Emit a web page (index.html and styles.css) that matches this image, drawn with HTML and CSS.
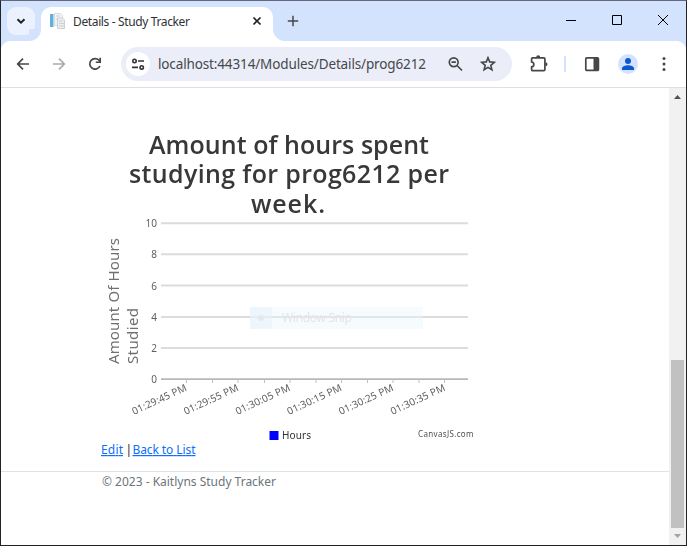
FILE: index.html
```html
<!DOCTYPE html>
<html lang="en">
<head>
<meta charset="utf-8">
<title>Details - Study Tracker</title>
<link rel="stylesheet" href="styles.css">
</head>
<body>
<div class="window">
  <header class="tabstrip">
    <button class="tab-search" aria-label="Search tabs"><svg width="28" height="28" viewBox="0 0 28 28"><path d="M10.500 12.300 14 15.700l3.500-3.400" fill="none" stroke="#202124" stroke-width="2"/></svg></button>
    <div class="tab">
      <svg class="favicon" width="17" height="16" viewBox="0 0 17 16"><path d="M1 1h3v13H1z" fill="#62b0da"/><path d="M4 1h1v13H4z" fill="#b4d9ec"/><path d="M5.500.500h6l2 2v10h-8z" fill="#f4f4f5" stroke="#d9dbde"/><path d="M8.500 5h5l2 2v8.500h-7z" fill="#eceef0" stroke="#cfd1d5"/><path d="M7 3h4M7 6h2M10 8h4M10 10.500h5M10 13h5" stroke="#cdd0d4"/></svg>
      <svg class="tab-title" width="122" height="20"><text x="0" y="15" textLength="117">Details - Study Tracker</text></svg>
      <svg class="tab-close" width="10" height="10" viewBox="0 0 10 10"><path d="m1.500 1.500 7 7m0-7-7 7" stroke="#202124" stroke-width="1.700"/></svg>
    </div>
    <svg class="new-tab" width="12" height="12" viewBox="0 0 12 12"><path d="M6 .800v10.400M.800 6h10.400" stroke="#474747" stroke-width="1.500"/></svg>
    <div class="captions">
      <svg width="46" height="40" viewBox="0 0 46 40"><path d="M18 19.500h10" stroke="#000"/></svg>
      <svg width="46" height="40" viewBox="0 0 46 40"><path d="M18.500 14.500h9v9h-9z" fill="none" stroke="#000"/></svg>
      <svg width="46" height="40" viewBox="0 0 46 40"><path d="m18 14 10 10m0-10L18 24" stroke="#000"/></svg>
    </div>
  </header>
  <nav class="toolbar">
    <svg class="nav-icon" width="20" height="20" viewBox="0 0 20 20"><path d="M16 10H5m5-5.300L4.700 10l5.300 5.300" fill="none" stroke="#474747" stroke-width="1.700"/></svg>
    <svg class="nav-icon" width="20" height="20" viewBox="0 0 20 20"><path d="M4 10h11m-5-5.300 5.300 5.300-5.300 5.300" fill="none" stroke="#ababab" stroke-width="1.700"/></svg>
    <svg class="nav-icon" width="20" height="20" viewBox="0 0 20 20"><path d="M14.900 12A5.300 5.300 0 1 1 14 6.300l1 1.300" fill="none" stroke="#474747" stroke-width="1.700"/><path d="M16 3.800V9h-5.200V7.400h3.500V3.800z" fill="#474747"/></svg>
    <div class="omnibox">
      <span class="site-info"><svg width="24" height="24" viewBox="0 0 24 24"><g fill="none" stroke="#333" stroke-width="1.600"><circle cx="8.500" cy="9" r="1.700"/><path d="M12 9h6M6 15.400h6"/><circle cx="15.700" cy="15.400" r="1.700"/></g></svg></span>
      <svg class="url" width="278" height="24"><text x="0" y="17" textLength="268">localhost:44314/Modules/Details/prog6212</text></svg>
      <svg class="zoom-icon" width="16" height="16" viewBox="0 0 16 16"><g fill="none" stroke="#474747" stroke-width="1.700"><circle cx="6.700" cy="6.200" r="4.400"/><path d="m10 9.500 5 5M4.500 6.200h4.400"/></g></svg>
      <svg class="star-icon" width="18" height="18" viewBox="0 0 18 18"><path d="m9 2.700 1.700 4.200 4.600.400-3.500 3 1.100 4.500L9 12.400l-3.900 2.400 1.100-4.500-3.500-3 4.600-.400z" fill="none" stroke="#474747" stroke-width="1.600"/></svg>
    </div>
    <svg class="extension" width="20" height="20" viewBox="0 0 20 20"><path d="M3.600 3.800h11.300c.600 0 1 .400 1 1v10.800c0 .600-.400 1-1 1H3.600c-.600 0-1-.400-1-1v-2.800c3-.400 3-4.400 0-4.800V4.800c0-.600.400-1 1-1z" fill="none" stroke="#474747" stroke-width="1.700"/><path d="M7.200 3.200a2 2 0 0 1 4 0zM16.500 8.200a2 2 0 0 1 0 4z" fill="#474747"/></svg>
    <span class="divider"></span>
    <svg class="side-panel" width="16" height="16" viewBox="0 0 16 16"><rect x="1.800" y="1.800" width="12.600" height="12.600" rx="1" fill="none" stroke="#474747" stroke-width="1.700"/><path d="M9.500 2H15v12H9.500z" fill="#474747"/></svg>
    <svg class="profile" width="20" height="20" viewBox="0 0 20 20"><circle cx="10" cy="10" r="10" fill="#d3e3fd"/><circle cx="10" cy="7" r="3" fill="#0b57d0"/><path d="M4 16v-1.700c0-2 3.500-3.100 6-3.100s6 1.100 6 3.100V16z" fill="#0b57d0"/></svg>
    <svg class="menu" width="6" height="16" viewBox="0 0 6 16"><g fill="#474747"><circle cx="3" cy="2.500" r="1.500"/><circle cx="3" cy="8" r="1.500"/><circle cx="3" cy="13.500" r="1.500"/></g></svg>
  </nav>
  <div class="viewport">
    <main class="page">
      <svg class="chart" width="400" height="353" viewBox="101 88 400 353">
        <g class="soft">
          <g class="chart-title">
            <text x="149" y="153.500" textLength="280">Amount of hours spent</text>
            <text x="129" y="182.500" textLength="320">studying for prog6212 per</text>
            <text x="251" y="213" textLength="74">week.</text>
          </g>
          <g class="axis-title">
            <text transform="translate(118.500 364) rotate(-90)" textLength="126">Amount Of Hours</text>
            <text transform="translate(137.500 364) rotate(-90)" textLength="56">Studied</text>
          </g>
          <path class="grid" d="M161 223.300h307M161 254.300h307M161 285.500h307M161 317h307M161 348h307"/>
          <path class="axis" d="M161 379.200h307"/>
          <path class="ticks" d="M186.500 379v4M212.500 379v4M238 379v4M264.500 379v4M290 379v4M316 379v4M341.500 379v4M367.500 379v4M393 379v4M419 379v4M444.500 379v4"/>
          <g class="labels y-labels">
            <text x="157" y="227">10</text><text x="157" y="258">8</text><text x="157" y="289.500">6</text><text x="157" y="320.500">4</text><text x="157" y="352">2</text><text x="157" y="383">0</text>
          </g>
          <g class="labels">
            <text transform="translate(134 415) rotate(-25)" textLength="59">01:29:45 PM</text>
            <text transform="translate(185.700 415) rotate(-25)" textLength="59">01:29:55 PM</text>
            <text transform="translate(237.400 415) rotate(-25)" textLength="59">01:30:05 PM</text>
            <text transform="translate(289.100 415) rotate(-25)" textLength="59">01:30:15 PM</text>
            <text transform="translate(340.800 415) rotate(-25)" textLength="59">01:30:25 PM</text>
            <text transform="translate(392.500 415) rotate(-25)" textLength="59">01:30:35 PM</text>
          </g>
          <text class="legend" x="282" y="439" textLength="29">Hours</text>
        </g>
        <g class="snip">
          <path d="M250 307h173v22H250z" fill="#e9f5fd" opacity=".4"/>
          <path d="M250 307h22v22h-22z" fill="#e6f1fe" opacity=".5"/>
          <circle cx="261" cy="318" r="3" fill="#e7e8ea"/>
          <text x="282" y="322" textLength="70">Window Snip</text>
        </g>
        <path d="M269.500 431h9v9h-9z" fill="#00f"/>
        <text class="credit" x="418" y="437" textLength="55.500">CanvasJS.com</text>
      </svg>
      <svg class="links" width="110" height="20"><text x="0" y="13"><a href="#" class="link"><tspan textLength="22">Edit</tspan></a></text><text x="24.500" y="13">|</text><text x="31.500" y="13"><a href="#" class="link"><tspan textLength="63">Back to List</tspan></a></text></svg>
      <footer class="footer"><svg width="200" height="20"><text x="0" y="14" textLength="174">© 2023 - Kaitlyns Study Tracker</text></svg></footer>
    </main>
    <div class="scrollbar">
      <svg width="17" height="17" viewBox="0 0 17 17"><path d="M5 11h7L8.500 7z" fill="#505050"/></svg>
      <span class="thumb"></span>
      <svg width="17" height="17" viewBox="0 0 17 17"><path d="M5 6h7l-3.500 4z" fill="#a3a3a3"/></svg>
    </div>
  </div>
</div>
</body>
</html>
```
FILE: styles.css
```css
* { box-sizing: border-box; }
body { margin: 0; font-family: "Noto Sans", "Open Sans", sans-serif; }
svg { display: block; flex: none; }
.window {
  width: 687px; height: 546px;
  display: flex; flex-direction: column;
  border: 1px solid #232326; border-top-color: #65677a;
  background: #d3e3fd; overflow: hidden;
}
.tabstrip { height: 40px; flex: none; display: flex; padding-left: 6px; }
.tab-search {
  width: 28px; height: 28px; margin: 6px 6px 0 0; padding: 0;
  border: 0; border-radius: 9px; background: #ebf2fe;
}
.tab {
  position: relative; width: 232px; height: 34px; margin-top: 6px;
  display: flex; align-items: center; padding: 0 12px 6px 8px;
  background: #fff; border-radius: 10px 10px 0 0;
}
.tab::before, .tab::after {
  content: ""; position: absolute; bottom: 0; width: 12px; height: 12px;
}
.tab::before { left: -12px; background: radial-gradient(circle at 0 0, #d3e3fd 11.500px, #fff 12.500px); }
.tab::after { right: -12px; background: radial-gradient(circle at 100% 0, #d3e3fd 11.500px, #fff 12.500px); }
.tab-title { margin-left: 7px; font-size: 12px; fill: #303134; }
.tab-close { margin-left: auto; margin-right: -1px; }
.new-tab { margin: 14px 0 0 14px; }
.captions { display: flex; margin-left: auto; }
.toolbar {
  height: 47px; flex: none; display: flex; align-items: center;
  padding: 0 0 1px 12px; background: #fff;
  border-bottom: 1px solid #dedfe1; border-radius: 9px 9px 0 0;
}
.nav-icon { margin-right: 16px; }
.omnibox {
  width: 391px; height: 34px; display: flex; align-items: center;
  padding: 0 15px 0 5px; border-radius: 17px; background: #ebeef8;
}
.site-info {
  width: 24px; height: 24px; flex: none; border-radius: 50%; background: #fff;
}
.url { margin-left: 8px; font-size: 13.500px; fill: #46484c; }
.zoom-icon { margin-left: auto; margin-right: 16px; }
.extension { margin-left: 17px; }
.divider { width: 2px; height: 16px; margin-left: 15px; background: #d3e3fd; }
.side-panel { margin-left: 18px; }
.profile { margin-left: 18px; }
.menu { margin-left: 23px; }
.viewport { flex: 1; min-height: 0; display: flex; background: #fff; }
.page { flex: 1; min-width: 0; display: flex; flex-direction: column; }
.chart { margin-left: 100px; }
/* The chart canvas is upscaled by the page zoom */
.soft { filter: blur(.4px); }
.chart-title { font-family: "Open Sans", sans-serif; font-size: 25px; font-weight: 600; fill: #383838; }
.axis-title { font-size: 15px; fill: #707070; }
.grid { fill: none; stroke: #dcdcdc; stroke-width: 2; }
.axis { stroke: #b8b8b8; stroke-width: 1.800; }
.ticks { stroke: #c0c0c0; fill: none; }
.labels { font-size: 10px; fill: #606060; }
.y-labels { text-anchor: end; }
.snip { font-size: 12px; fill: #e4e5e6; }
.legend { font-size: 10px; fill: #333; }
.credit { font-size: 8px; fill: #505050; }
.links { margin-left: 100px; font-size: 12px; fill: #212529; }
.link { fill: #0d6efd; text-decoration: underline; }
.footer {
  margin-top: 10px; padding: 0 0 0 101px;
  border-top: 1px solid #dee2e6; font-size: 12px; fill: #6c757d;
}
.scrollbar { width: 17px; flex: none; display: flex; flex-direction: column; background: #f1f1f1; }
.thumb { width: 13px; height: 168px; margin: auto 2px 0; background: #c1c1c1; }
```
